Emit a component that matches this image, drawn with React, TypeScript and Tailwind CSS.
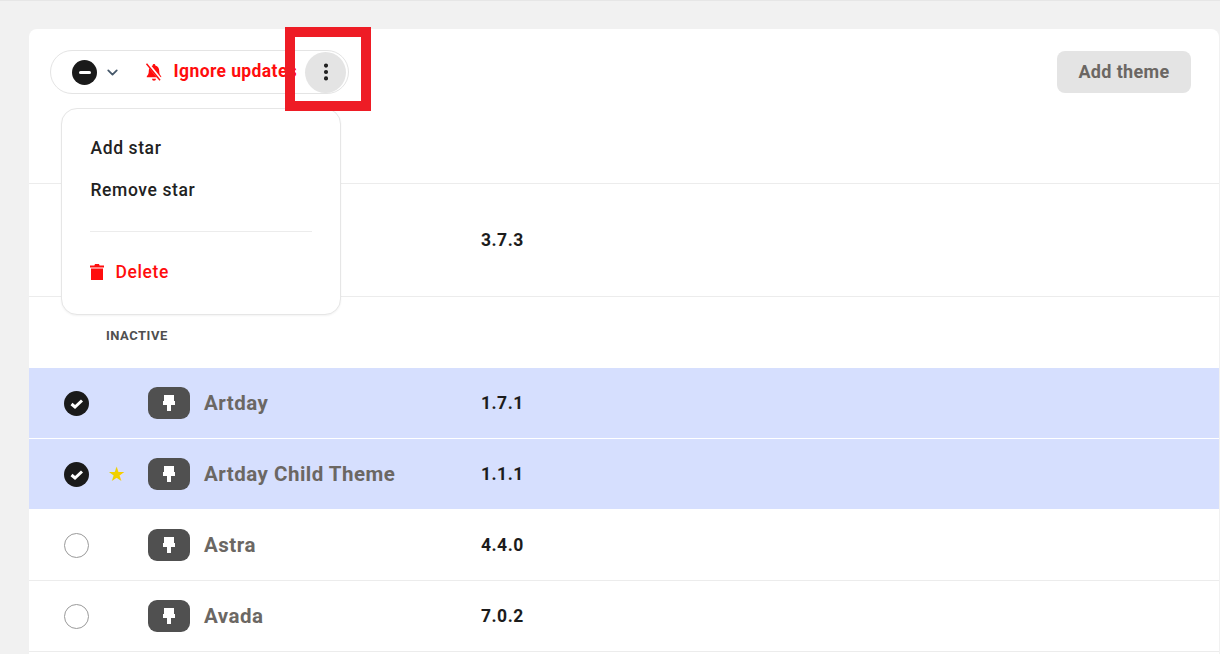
import { ChevronDown, MoreVertical } from 'lucide-react'

const THEMES = [
  { name: 'Artday', version: '1.7.1', selected: true, star: false },
  { name: 'Artday Child Theme', version: '1.1.1', selected: true, star: true },
  { name: 'Astra', version: '4.4.0', selected: false, star: false },
  { name: 'Avada', version: '7.0.2', selected: false, star: false },
]

function BrushIcon() {
  return (
    <div className="flex h-8 w-[42px] shrink-0 items-center justify-center rounded-[9px] bg-[#505050]">
      <svg width="14" height="18" viewBox="0 0 14 18" fill="#fff">
        <path d="M2 1h10v6h1v4H1V7h1zM5 11h4v6H5z" />
      </svg>
    </div>
  )
}

function BellSlash() {
  return (
    <svg width="18" height="18" viewBox="0 0 18 18" className="ml-[24px] shrink-0">
      <path d="M9 1a1.300 1.300 0 0 1 1.300 1.400c2.700.6 3.900 2.700 3.900 5.300 0 3 .8 4.300 2 5.600v1H1.800v-1c1.200-1.300 2-2.600 2-5.600 0-2.600 1.200-4.700 3.900-5.300A1.300 1.300 0 0 1 9 1zM7 15.800h4a2 2 0 0 1-4 0z" fill="#ff0d0d" />
      <path d="M2.500 .500l13 16" stroke="#fff" strokeWidth="3.200" />
      <path d="M1.500 .800l13.500 16.400" stroke="#ff0d0d" strokeWidth="1.500" />
    </svg>
  )
}

function TrashIcon() {
  return (
    <svg width="14" height="16" viewBox="0 0 14 16" fill="#ff0d0d" className="mr-[11.500px] shrink-0">
      <path d="M5 0h4l.6 1.400H14v2H0v-2h4.400zM1 4.500h12V16H1z" />
    </svg>
  )
}

function Check({ selected }: { selected: boolean }) {
  if (!selected) {
    return <div className="h-[25px] w-[25px] rounded-full border border-[#9a9a9a] bg-white" />
  }
  return (
    <div className="flex h-[25px] w-[25px] items-center justify-center rounded-full bg-[#1a1a1a]">
      <svg width="14" height="11" viewBox="0 0 14 11" fill="none" stroke="#fff" strokeWidth="3">
        <path d="M1.500 6l3.500 3 7-6.500" />
      </svg>
    </div>
  )
}

function ThemeRow({ name, version, selected, star }: (typeof THEMES)[number]) {
  return (
    <div
      className={`flex h-[71px] items-center border-b ${
        selected ? 'border-white bg-[#d6dffe]' : 'border-[#ececec] bg-white'
      }`}
    >
      <div className="ml-[35px] w-[40px]">
        <Check selected={selected} />
      </div>
      <div className="w-[44px] pl-[4px] text-[20px] leading-none text-[#f2d000]">{star ? '★' : ''}</div>
      <BrushIcon />
      <div className="ml-[14px] w-[277px] text-[20.500px] font-bold tracking-[0.5px] text-[#6b6763]">{name}</div>
      <div className="text-[17.500px] font-bold tracking-[0.5px] text-[#1c1c1c]">{version}</div>
    </div>
  )
}

export default function App() {
  return (
    <div className="relative h-[654px] overflow-hidden border-t border-[#e6e6e6] bg-[#f1f1f1] pl-[29px] pr-px pt-[28px] font-['Roboto',sans-serif]">
      <div className="h-[625px] rounded-t-lg bg-white">
        {/* Toolbar */}
        <div className="flex h-[155px] items-start justify-between border-b border-[#ececec] pl-[21px] pr-[28px] pt-[21px]">
          <div className="flex h-[44px] w-[299px] items-center rounded-full border border-[#e4e4e4] pl-[21px] pr-[2px]">
            <div className="flex h-[25px] w-[25px] shrink-0 items-center justify-center rounded-full bg-[#1a1a1a]">
              <div className="h-[3px] w-[12px] rounded-sm bg-white" />
            </div>
            <ChevronDown className="ml-[6.500px] h-[17px] w-[17px] shrink-0 text-[#46586a]" strokeWidth={2.500} />
            <BellSlash />
            <span className="ml-[11px] whitespace-nowrap pb-[2px] text-[17.500px] font-bold tracking-[0.4px] text-[#ff0d0d]">Ignore updates</span>
            <div className="relative z-10 ml-auto flex h-[41px] w-[41px] shrink-0 items-center justify-center rounded-full bg-[#e4e4e4]">
              <MoreVertical className="h-[22px] w-[22px] text-[#1a1a1a]" strokeWidth={2.500} />
            </div>
          </div>
          <button className="mt-px h-[42px] w-[134px] rounded-lg bg-[#e4e4e4] pb-[2px] text-[18px] font-bold tracking-[0.35px] text-[#6b6763]">
            Add theme
          </button>
        </div>

        {/* Active theme row sits behind the menu */}
        <div className="flex h-[113px] items-center border-b border-[#ececec] pl-[452px]">
          <span className="text-[17.500px] font-bold tracking-[0.5px] text-[#1c1c1c]">3.7.3</span>
        </div>

        <div className="flex h-[71px] items-center pl-[77px] pt-[6px] text-[13px] font-bold tracking-[0.5px] text-[#4f4f4f]">INACTIVE</div>

        {THEMES.map((t) => (
          <ThemeRow key={t.name} {...t} />
        ))}
      </div>

      {/* Dropdown menu */}
      <div className="absolute left-[61px] top-[107px] z-10 h-[207px] w-[280px] rounded-2xl border border-[#e6e6e6] bg-white pl-[28px] pr-[29px] pt-[28px] shadow-[0_1px_2px_rgba(0,0,0,0.05)]">
        <div className="pl-[0.500px] text-[17.500px] font-medium leading-[22px] tracking-[0.6px] text-[#222]">Add star</div>
        <div className="mt-[20px] pl-[0.500px] text-[17.500px] font-medium leading-[22px] tracking-[0.6px] text-[#222]">Remove star</div>
        <div className="mt-[30px] h-px w-[222px] bg-[#ececec]" />
        <div className="mt-[29px] flex items-center text-[17.500px] font-medium leading-[22px] tracking-[0.6px] text-[#ff0d0d]">
          <TrashIcon />
          Delete
        </div>
      </div>

      {/* Annotation box */}
      <div className="absolute left-[285px] top-[26px] z-20 h-[84px] w-[86px] border-[10px] border-[#ee1c25]" />
    </div>
  )
}
